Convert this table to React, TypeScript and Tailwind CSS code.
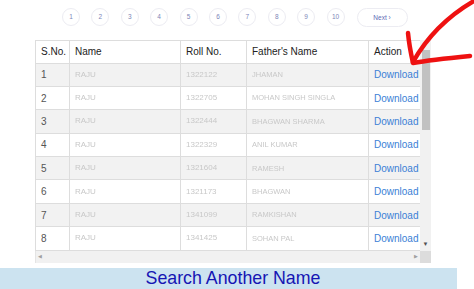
import React from "react";

const rows = [
  { n: "1", name: "RAJU", roll: "1322122", father: "JHAMAN" },
  { n: "2", name: "RAJU", roll: "1322705", father: "MOHAN SINGH SINGLA" },
  { n: "3", name: "RAJU", roll: "1322444", father: "BHAGWAN SHARMA" },
  { n: "4", name: "RAJU", roll: "1322329", father: "ANIL KUMAR" },
  { n: "5", name: "RAJU", roll: "1321604", father: "RAMESH" },
  { n: "6", name: "RAJU", roll: "1321173", father: "BHAGWAN" },
  { n: "7", name: "RAJU", roll: "1341099", father: "RAMKISHAN" },
  { n: "8", name: "RAJU", roll: "1341425", father: "SOHAN PAL" },
];

export default function App() {
  const font = { fontFamily: '"Liberation Sans", Arial, sans-serif' };
  return (
    <div className="relative w-[474px] h-[289px] bg-white overflow-hidden" style={font}>
      {/* pagination */}
      <div className="flex pl-[62px] pt-[8px] h-[40px] items-start">
        {["1", "2", "3", "4", "5", "6", "7", "8", "9", "10"].map((p) => (
          <div
            key={p}
            className="w-[18px] h-[18px] mr-[11.4px] rounded-full border border-[#ececf2] flex items-center justify-center text-[6.5px] text-[#7d86b8]"
          >
            {p}
          </div>
        ))}
        <div className="ml-[0.6px] w-[51px] h-[19px] rounded-full border border-[#ececf2] flex items-center justify-center text-[6.5px] text-[#5d6ab5]">
          Next ›
        </div>
      </div>

      {/* table with scrollbars */}
      <div className="ml-[35px] w-[396px] flex flex-col">
        <div className="flex">
          <div className="w-[385px] border-t border-l border-[#dddddd]">
            <div className="flex h-[22.5px] text-[10px] text-[#222] items-center border-b border-[#dddddd] bg-white">
              <div className="w-[34px] h-full flex items-center pl-[5px] border-r border-[#dddddd]">S.No.</div>
              <div className="w-[111px] h-full flex items-center pl-[5px] border-r border-[#dddddd]">Name</div>
              <div className="w-[66px] h-full flex items-center pl-[5px] border-r border-[#dddddd]">Roll No.</div>
              <div className="w-[122px] h-full flex items-center pl-[5px] border-r border-[#dddddd]">Father's Name</div>
              <div className="flex-1 h-full flex items-center pl-[5px]">Action</div>
            </div>
            {rows.map((r, i) => (
              <div
                key={r.n}
                className={`flex h-[23.4px] text-[10px] items-center border-b border-[#dddddd] ${i % 2 === 0 ? "bg-[#f2f2f2]" : "bg-white"}`}
              >
                <div className="w-[34px] h-full flex items-center pl-[5px] border-r border-[#dddddd] text-[#555]">{r.n}</div>
                <div className="w-[111px] h-full flex items-center pl-[5px] border-r border-[#dddddd] text-[#c8c8c8] text-[8px] blur-[0.6px]">{r.name}</div>
                <div className="w-[66px] h-full flex items-center pl-[5px] border-r border-[#dddddd] text-[#c8c8c8] text-[8px] blur-[0.6px]">{r.roll}</div>
                <div className="w-[122px] h-full flex items-center pl-[5px] border-r border-[#dddddd] text-[#c8c8c8] text-[7.5px] blur-[0.6px] whitespace-nowrap overflow-hidden">{r.father}</div>
                <div className="flex-1 h-full flex items-center pl-[5px] text-[#3b7fd6]">Download</div>
              </div>
            ))}
          </div>
          {/* vertical scrollbar */}
          <div className="w-[11px] bg-[#f1f1f1] flex flex-col items-center">
            <div className="h-[10px]" />
            <div className="w-[8px] h-[80px] bg-[#c1c1c1]" />
            <div className="flex-1" />
            <div className="h-[10px] text-[6px] text-[#505050] leading-none">▼</div>
          </div>
        </div>
        {/* horizontal scrollbar */}
        <div className="flex h-[12px]">
          <div className="w-[385px] bg-[#f1f1f1] flex items-center justify-between px-[2px] text-[5px] text-[#a0a0a0] border-l border-[#e4e4e4]">
            <span>◀</span>
            <span>▶</span>
          </div>
          <div className="w-[11px] bg-[#dcdcdc]" />
        </div>
      </div>

      {/* search bar */}
      <div className="mt-[5px] w-[457px] h-[22px] bg-[#cce3f0] flex items-center justify-center pl-[9px] text-[17.8px] text-[#1616b4]">
        Search Another Name
      </div>

      {/* red arrow */}
      <svg className="absolute left-0 top-0 pointer-events-none" width="474" height="289">
        <path
          d="M474 1 C 455 12, 430 32, 413 62"
          stroke="#ee1111"
          strokeWidth="4.5"
          fill="none"
          strokeLinecap="round"
        />
        <path
          d="M408 33 C 409 44, 411 54, 413 63 C 430 60, 450 58, 470 56"
          stroke="#ee1111"
          strokeWidth="4.5"
          fill="none"
          strokeLinecap="round"
          strokeLinejoin="round"
        />
      </svg>
    </div>
  );
}
